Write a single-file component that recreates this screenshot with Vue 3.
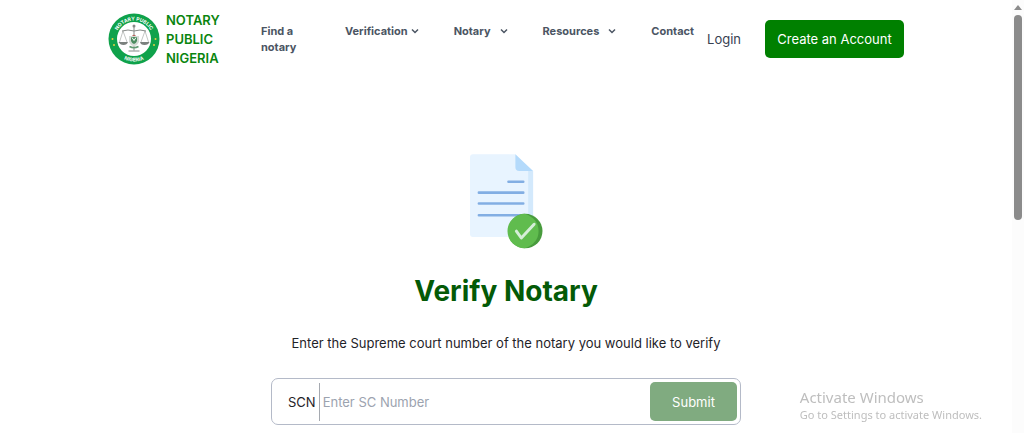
<template>
  <div class="page">
    <header class="header">
      <a href="#" class="brand">
        <svg class="logo" viewBox="0 0 104 104" aria-hidden="true">
          <defs>
            <path id="arc-top" d="M15 52a37 37 0 0 1 74 0" />
            <path id="arc-bottom" d="M7 52a45 45 0 0 0 90 0" />
          </defs>
          <circle cx="52" cy="52" r="51" fill="#0fa24b" />
          <circle cx="52" cy="52" r="34" fill="#fff" />
          <text class="logo-text">
            <textPath href="#arc-top" startOffset="50%" text-anchor="middle">NOTARY PUBLIC</textPath>
          </text>
          <text class="logo-text">
            <textPath href="#arc-bottom" startOffset="50%" text-anchor="middle">NIGERIA</textPath>
          </text>
          <g fill="#e3cf45">
            <circle cx="9" cy="52" r="2" />
            <circle cx="12" cy="64" r="2" />
            <circle cx="95" cy="52" r="2" />
            <circle cx="92" cy="64" r="2" />
          </g>
          <g fill="none" stroke="#858a87" stroke-width="2">
            <path d="M52 27v48M28 36q12-4 24 0q12-4 24 0M41 76h22" />
            <path d="M30 36l-7 22M30 36l8 22M74 36l-8 22M74 36l7 22" stroke-width="1" />
          </g>
          <path d="M21 58h19q-2 6-9 6t-10-6zM64 58h19q-2 6-10 6t-9-6z" fill="#7b817e" />
          <circle cx="52" cy="26" r="3" fill="#888" />
          <path d="M42 46h20v12q-3 7-10 9q-7-2-10-9z" fill="#d5dbd6" />
          <path d="M46 48h12v8q-2 5-6 6q-4-1-6-6z" fill="#4c8c60" />
          <path d="M48 49l4 6 4-6" fill="none" stroke="#fff" stroke-width="2" />
          <path d="M48 46q4-5 8 0z" fill="#b6645a" />
          <path d="M43 67q9 5 18 0" fill="none" stroke="#629b73" stroke-width="3" />
        </svg>
        <span class="brand-name">NOTARY PUBLIC NIGERIA</span>
      </a>

      <nav class="nav">
        <a
          v-for="item in menu"
          :key="item.label"
          href="#"
          class="nav-link"
          :class="{ spread: item.spread, narrow: item.narrow }"
        >
          {{ item.label }}
          <svg v-if="item.dropdown" class="chevron" viewBox="0 0 8 8" aria-hidden="true">
            <path d="M1 2.5l3 3 3-3" />
          </svg>
        </a>
      </nav>

      <a href="#" class="login">Login</a>
      <button type="button" class="btn btn-account">Create an Account</button>
    </header>

    <main class="main">
      <svg class="doc-icon" viewBox="0 0 74 98" aria-hidden="true">
        <path d="M50 17h14v67H50z" fill="#d3e9fc" />
        <path d="M3 0h43l13 17v67H3a3 3 0 0 1-3-3V3a3 3 0 0 1 3-3z" fill="#e8f4ff" />
        <path d="M46 0l18 17H50a4 4 0 0 1-4-4z" fill="#b4dafb" />
        <g stroke="#82aee3" stroke-width="2.6" stroke-linecap="round">
          <path d="M39 28h15M9 39h45M9 50h45M9 62h45" />
        </g>
        <circle cx="56" cy="78" r="17.5" fill="#489b3d" />
        <path d="M55.500 60.500a17.500 17.500 0 0 0 0 35q14-5 14-17.500t-14-17.500z" fill="#60bc4e" />
        <path
          d="M47 78l5 7 13-14"
          fill="none"
          stroke="#d5eed8"
          stroke-width="3"
          stroke-linecap="round"
          stroke-linejoin="round"
        />
      </svg>

      <h1 class="title">Verify Notary</h1>
      <p class="subtitle">Enter the Supreme court number of the notary you would like to verify</p>

      <form class="search" @submit.prevent>
        <label for="scn" class="search-label">SCN</label>
        <input id="scn" v-model="scn" type="text" class="search-input" placeholder="Enter SC Number" />
        <button type="submit" class="btn btn-submit">Submit</button>
      </form>
    </main>

    <div class="watermark">
      <p class="watermark-title">Activate Windows</p>
      <p class="watermark-text">Go to Settings to activate Windows.</p>
    </div>

    <div class="scrollbar" aria-hidden="true">
      <svg class="scroll-arrow" viewBox="0 0 8 5"><path d="M4 0l4 5H0z" /></svg>
      <div class="scroll-thumb"></div>
    </div>
  </div>
</template>

<script setup>
import { ref } from 'vue'

const scn = ref('')

const menu = [
  { label: 'Find a notary', narrow: true },
  { label: 'Verification', dropdown: true },
  { label: 'Notary', dropdown: true, spread: true },
  { label: 'Resources', dropdown: true, spread: true },
  { label: 'Contact' }
]
</script>

<style>
body {
  margin: 0;
  background: #fff;
  overflow: hidden;
}
</style>

<style scoped>
.page {
  padding-right: 12px;
  font-family: Inter, "Liberation Sans", sans-serif;
  font-size: 13px;
  color: #1f2328;
}

a {
  color: inherit;
  text-decoration: none;
}

.header {
  display: flex;
  align-items: center;
  max-width: 796px;
  height: 78px;
  margin: 0 auto;
}

.brand {
  display: flex;
  align-items: center;
  gap: 6px;
  width: 153px;
}

.logo {
  width: 52px;
  height: 52px;
  flex: none;
}

.logo-text {
  fill: #fff;
  font-size: 10px;
  font-weight: 700;
}

.brand-name {
  width: 60px;
  font-weight: 600;
  line-height: 19px;
  color: #0a850f;
}

.nav {
  display: flex;
  align-items: flex-start;
  gap: 35px;
  height: 32px;
  margin-right: 13px;
  font-size: 11px;
  font-weight: 700;
  line-height: 16px;
  color: #4b5563;
}

.nav-link {
  display: flex;
  align-items: center;
  gap: 3px;
  white-space: nowrap;
}

.nav-link.narrow {
  width: 49px;
  white-space: normal;
}

.nav-link.spread {
  gap: 9px;
}

.chevron {
  width: 8px;
  height: 8px;
  fill: none;
  stroke: #4b5563;
  stroke-width: 1.5;
}

.login {
  font-size: 13px;
  color: #374151;
}

.btn {
  border: none;
  border-radius: 5px;
  font-family: inherit;
  font-size: 13px;
  color: #fff;
  cursor: pointer;
}

.btn-account {
  width: 139px;
  height: 38px;
  margin-left: auto;
  padding: 0;
  background: #008000;
}

.main {
  display: flex;
  flex-direction: column;
  align-items: center;
  padding-top: 76px;
}

.doc-icon {
  width: 73px;
  height: 97px;
}

.title {
  margin: 22px 0 0;
  font-size: 28px;
  font-weight: 700;
  line-height: 36px;
  color: #045a07;
}

.subtitle {
  margin: 24px 0 0;
  font-size: 13px;
  line-height: 20px;
}

.search {
  display: flex;
  align-items: center;
  box-sizing: border-box;
  width: 100%;
  max-width: 470px;
  height: 47px;
  margin-top: 25px;
  padding: 3px;
  border: 1px solid #b4bac8;
  border-radius: 7px;
}

.search-label {
  padding: 0 3px 0 13px;
  line-height: 38px;
  border-right: 1px solid #a5a9b0;
}

.search-input {
  flex: 1;
  min-width: 0;
  padding: 0 3px;
  border: none;
  outline: none;
  background: none;
  font-family: inherit;
  font-size: 13px;
  color: inherit;
}

.search-input::placeholder {
  color: #9ca3af;
}

.btn-submit {
  width: 87px;
  height: 39px;
  background: #80ab80;
}

.watermark {
  position: fixed;
  right: 42px;
  bottom: 10px;
  font-family: "Noto Sans", "Open Sans", sans-serif;
  color: #bebebe;
}

.watermark-title {
  margin: 0;
  font-size: 15px;
  line-height: 20px;
}

.watermark-text {
  margin: 0;
  font-size: 11px;
  line-height: 16px;
}

.scrollbar {
  position: fixed;
  top: 0;
  right: 0;
  bottom: 0;
  display: flex;
  flex-direction: column;
  align-items: center;
  gap: 5px;
  width: 12px;
  padding-top: 5px;
  box-sizing: border-box;
  background: #fcfcfc;
}

.scroll-arrow {
  width: 8px;
  height: 5px;
  flex: none;
  fill: #8b8b8b;
}

.scroll-thumb {
  width: 8px;
  height: 48%;
  border-radius: 4px;
  background: #8b8b8b;
}
</style>
